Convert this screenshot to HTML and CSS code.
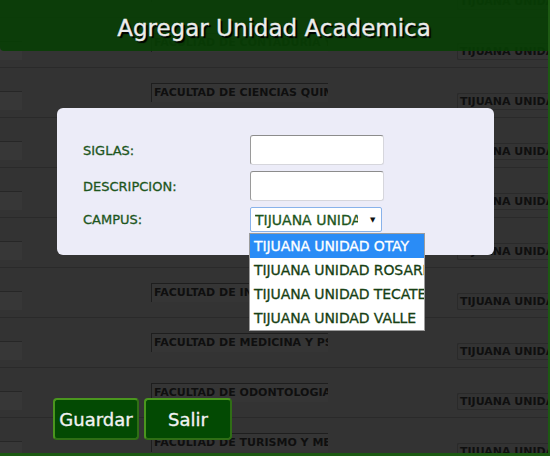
FILE: index.html
```html
<!DOCTYPE html>
<html lang="es">
<head>
<meta charset="utf-8">
<title>Agregar Unidad Academica</title>
<link rel="stylesheet" href="styles.css">
</head>
<body>
<div class="table">
  <div class="row"><div class="cell-id"></div><div class="cell-name">FACULTAD DE ARTES</div><div class="cell-campus">TIJUANA UNIDAD OTAY</div></div>
  <div class="row"><div class="cell-id"></div><div class="cell-name">FACULTAD DE CONTADURIA Y ADMINISTRACION</div><div class="cell-campus">TIJUANA UNIDAD OTAY</div></div>
  <div class="row"><div class="cell-id"></div><div class="cell-name">FACULTAD DE CIENCIAS QUIMICAS E INGENIERIA</div><div class="cell-campus">TIJUANA UNIDAD OTAY</div></div>
  <div class="row"><div class="cell-id"></div><div class="cell-name">FACULTAD DE DEPORTES</div><div class="cell-campus">TIJUANA UNIDAD OTAY</div></div>
  <div class="row"><div class="cell-id"></div><div class="cell-name">FACULTAD DE DERECHO</div><div class="cell-campus">TIJUANA UNIDAD OTAY</div></div>
  <div class="row"><div class="cell-id"></div><div class="cell-name">FACULTAD DE ECONOMIA Y RELACIONES INTERNACIONALES</div><div class="cell-campus">TIJUANA UNIDAD OTAY</div></div>
  <div class="row"><div class="cell-id"></div><div class="cell-name">FACULTAD DE INGENIERIA</div><div class="cell-campus">TIJUANA UNIDAD OTAY</div></div>
  <div class="row"><div class="cell-id"></div><div class="cell-name">FACULTAD DE MEDICINA Y PSICOLOGIA</div><div class="cell-campus">TIJUANA UNIDAD OTAY</div></div>
  <div class="row"><div class="cell-id"></div><div class="cell-name">FACULTAD DE ODONTOLOGIA</div><div class="cell-campus">TIJUANA UNIDAD OTAY</div></div>
  <div class="row"><div class="cell-id"></div><div class="cell-name">FACULTAD DE TURISMO Y MERCADOTECNIA</div><div class="cell-campus">TIJUANA UNIDAD OTAY</div></div>
</div>

<div class="dialog">
  <header class="dialog-header"><h1 class="dialog-title">Agregar Unidad Academica</h1></header>
  <form class="card">
    <label class="field-label" for="siglas">SIGLAS:</label>
    <input class="field-input" id="siglas" type="text">
    <label class="field-label" for="descripcion">DESCRIPCION:</label>
    <input class="field-input" id="descripcion" type="text">
    <label class="field-label">CAMPUS:</label>
    <div class="select">
      <span class="select-value">TIJUANA UNIDAD OTAY</span><span class="select-arrow">▼</span>
      <ul class="options">
        <li class="option option-active">TIJUANA UNIDAD OTAY</li>
        <li class="option">TIJUANA UNIDAD ROSARITO</li>
        <li class="option">TIJUANA UNIDAD TECATE</li>
        <li class="option">TIJUANA UNIDAD VALLE</li>
      </ul>
    </div>
  </form>
  <div class="actions">
    <button class="btn btn-save" type="button">Guardar</button>
    <button class="btn btn-exit" type="button">Salir</button>
  </div>
</div>
</body>
</html>
```

FILE: styles.css
```css
html, body {
  margin: 0;
  padding: 0;
}

body {
  position: relative;
  width: 550px;
  height: 456px;
  overflow: hidden;
  background: #333333;
  font-family: "DejaVu Sans", Verdana, sans-serif;
}

/* background table (dimmed page) */
.table {
  margin-top: -33px;
}

.row {
  display: grid;
  grid-template-columns: 22px 129px 177px 129px 1fr;
  align-items: start;
  height: 50px;
  box-sizing: border-box;
  border-top: 1px solid #2a2a2a;
}

.cell-id {
  grid-column: 1;
  margin-top: 23px;
  height: 19px;
  box-sizing: border-box;
  background: #373737;
  border-top: 1px solid #262626;
}

.cell-name {
  grid-column: 3;
  margin-top: 15px;
  height: 19px;
  box-sizing: border-box;
  padding-left: 2px;
  background: #353535;
  border-top: 1px solid #1e1e1e;
  border-left: 1px solid #1e1e1e;
  color: #0f0f0f;
  font-size: 11px;
  font-weight: bold;
  line-height: 18px;
  white-space: nowrap;
  overflow: hidden;
}

.cell-campus {
  grid-column: 5;
  margin-top: 25px;
  height: 17px;
  box-sizing: border-box;
  padding-left: 2px;
  border: 1px solid #2a2a2a;
  border-right: none;
  border-radius: 2px 0 0 2px;
  color: #0f0f0f;
  font-size: 11px;
  font-weight: bold;
  line-height: 15px;
  white-space: nowrap;
  overflow: hidden;
}

/* dialog layer */
.dialog {
  position: absolute;
  inset: 0;
  display: flex;
  flex-direction: column;
  border-right: 2px solid #1c5a12;
  border-bottom: 3px solid #1c5a12;
}

.dialog-header {
  height: 51px;
  box-sizing: border-box;
  padding-top: 4px;
  display: flex;
  align-items: center;
  justify-content: center;
  background: rgba(8, 62, 4, 0.9);
  border-bottom-left-radius: 4px;
}

.dialog-title {
  margin: 0;
  font-size: 23px;
  font-weight: normal;
  color: #ececec;
  -webkit-text-stroke: 0.35px #ececec;
  text-shadow: 2px 2px 1px #000;
}

.card {
  margin: 57px 0 0 57px;
  width: 437px;
  height: 147px;
  box-sizing: border-box;
  padding: 27px 0 0 26px;
  background: #ececf8;
  border-radius: 6px;
  display: grid;
  grid-template-columns: 167px 134px;
  grid-auto-rows: min-content;
  row-gap: 6px;
  align-items: center;
}

.field-label {
  font-size: 13px;
  color: #1d561d;
  -webkit-text-stroke: 0.3px #1d561d;
}

.field-input {
  width: 134px;
  height: 30px;
  box-sizing: border-box;
  margin: 0;
  padding: 0 4px;
  background: #ffffff;
  border: 1px solid #d6d6dc;
  border-top-color: #8c8c8c;
  border-left-color: #9a9a9a;
  border-radius: 3px;
}

.select {
  position: relative;
  width: 132px;
  height: 25px;
  box-sizing: border-box;
  padding-left: 4px;
  display: flex;
  align-items: center;
  background: #ffffff;
  border: 1px solid #88b2ea;
  border-radius: 2px;
}

.select-value {
  width: 103px;
  overflow: hidden;
  white-space: nowrap;
  font-size: 14px;
  color: #1d561d;
  -webkit-text-stroke: 0.3px #1d561d;
}

.select-arrow {
  margin-left: 12px;
  font-size: 7px;
  color: #111;
}

.options {
  position: absolute;
  left: -2px;
  top: 25px;
  width: 176px;
  box-sizing: border-box;
  margin: 0;
  padding: 0;
  list-style: none;
  background: #ffffff;
  border: 1px solid #9c9c9c;
}

.option {
  height: 24px;
  padding-left: 4px;
  line-height: 24px;
  font-size: 14px;
  letter-spacing: -0.1px;
  color: #173f14;
  -webkit-text-stroke: 0.3px #173f14;
  white-space: nowrap;
  overflow: hidden;
}

.option-active {
  background: #2a8cf6;
  color: #ffffff;
  -webkit-text-stroke: 0.3px #ffffff;
}

.actions {
  margin-top: 143px;
  padding-left: 53px;
  display: flex;
  gap: 5px;
}

.btn {
  height: 42px;
  box-sizing: border-box;
  padding: 0;
  background: #034a03;
  border: 2px solid #2f6e15;
  border-top-color: #4a961e;
  border-left-color: #4a961e;
  border-radius: 4px;
  color: #f2f2f2;
  -webkit-text-stroke: 0.35px #f2f2f2;
  font-family: "DejaVu Sans", Verdana, sans-serif;
  font-size: 18px;
}

.btn-save {
  width: 86px;
}

.btn-exit {
  width: 88px;
}
```
